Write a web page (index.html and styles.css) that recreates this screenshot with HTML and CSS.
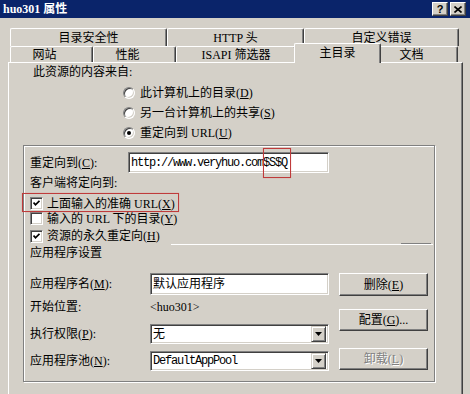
FILE: index.html
```html
<!DOCTYPE html>
<html lang="zh-CN">
<head>
<meta charset="utf-8">
<title>huo301 属性</title>
<link rel="stylesheet" href="styles.css">
</head>
<body>
<div class="window">
  <div class="titlebar">
    <span class="title">huo301 属性</span>
    <div class="tbtns">
      <span class="tbtn q">?</span>
      <span class="tbtn">
        <svg width="8" height="7" viewBox="0 0 8 7"><path d="M0.5 0.5 L7.5 6.5 M7.5 0.5 L0.5 6.5" stroke="#000" stroke-width="1.6" fill="none"/></svg>
      </span>
    </div>
  </div>

  <div class="content">
    <div class="tabs">
      <div class="tabrow row1">
        <div class="tab t-dirsec">目录安全性</div>
        <div class="tab t-http">HTTP 头</div>
        <div class="tab t-err">自定义错误</div>
      </div>
      <div class="tabrow row2">
        <div class="tab t-site shift">网站</div>
        <div class="tab t-perf shift">性能</div>
        <div class="tab t-isapi">ISAPI 筛选器</div>
        <div class="tab t-home sel">主目录</div>
        <div class="tab t-doc shift">文档</div>
      </div>
    </div>

    <div class="panel">
      <div class="src-label">此资源的内容来自:</div>
      <div class="radios">
        <div class="radio-row"><span class="radio"></span><span>此计算机上的目录(<u>D</u>)</span></div>
        <div class="radio-row"><span class="radio"></span><span>另一台计算机上的共享(<u>S</u>)</span></div>
        <div class="radio-row"><span class="radio on"></span><span>重定向到 URL(<u>U</u>)</span></div>
      </div>

      <div class="group">
        <div class="row-redirect">
          <span class="lbl-redirect">重定向到(<u>C</u>):</span>
          <div class="field f-url"><span class="mono">http://www.veryhuo.com$S$Q</span></div>
        </div>
        <div class="client-label">客户端将定向到:</div>
        <div class="checks">
          <div class="check-row"><span class="check on"><svg width="7" height="7" viewBox="0 0 7 7"><path d="M0.5 2.5 L2.5 4.8 L6.5 0.8" stroke="#000" stroke-width="1.8" fill="none"/></svg></span><span>上面输入的准确 URL(<u>X</u>)</span></div>
          <div class="check-row"><span class="check"></span><span>输入的 URL 下的目录(<u>Y</u>)</span></div>
          <div class="check-row last"><span class="check on"><svg width="7" height="7" viewBox="0 0 7 7"><path d="M0.5 2.5 L2.5 4.8 L6.5 0.8" stroke="#000" stroke-width="1.8" fill="none"/></svg></span><span>资源的永久重定向(<u>H</u>)</span></div>
        </div>
        <div class="sep"></div>
        <div class="app-title">应用程序设置</div>

        <div class="app-grid">
          <div class="app-left">
            <div class="app-row r-name">
              <span class="app-lbl">应用程序名(<u>M</u>):</span>
              <div class="field f-app"><span>默认应用程序</span></div>
            </div>
            <div class="app-row r-start">
              <span class="app-lbl">开始位置:</span>
              <span>&lt;huo301&gt;</span>
            </div>
            <div class="app-row r-perm">
              <span class="app-lbl">执行权限(<u>P</u>):</span>
              <div class="field f-sel"><span>无</span><span class="drop"><svg width="7" height="4" viewBox="0 0 7 4"><path d="M0 0 H7 L3.5 4 Z" fill="#000"/></svg></span></div>
            </div>
            <div class="app-row r-pool">
              <span class="app-lbl">应用程序池(<u>N</u>):</span>
              <div class="field f-sel"><span class="mono">DefaultAppPool</span><span class="drop"><svg width="7" height="4" viewBox="0 0 7 4"><path d="M0 0 H7 L3.5 4 Z" fill="#000"/></svg></span></div>
            </div>
          </div>
          <div class="app-right">
            <div class="btn b-del">删除(<u>E</u>)</div>
            <div class="btn b-cfg">配置(<u>G</u>)...</div>
            <div class="btn b-unload disabled">卸载(<u>L</u>)</div>
          </div>
        </div>
      </div>
    </div>
  </div>

  <div class="mark mark-url"></div>
  <div class="mark mark-exact"></div>
</div>
</body>
</html>
```

FILE: styles.css
```css
* { box-sizing: border-box; }
html, body { margin: 0; padding: 0; }
body {
  width: 470px;
  height: 394px;
  overflow: hidden;
  background: #d4d0c8;
  color: #000;
  font-family: "Liberation Serif", "Noto Sans CJK SC", serif;
  font-size: 12px;
  line-height: 14px;
}
u { text-decoration: underline; text-underline-offset: 1px; }

.window { position: relative; width: 470px; height: 394px; }

/* title bar */
.titlebar {
  height: 18px;
  background: #0a246a;
  display: flex;
  align-items: center;
  justify-content: space-between;
  padding: 0 4px 0 3px;
}
.title { color: #fff; font-weight: bold; font-size: 12px; line-height: 14px; }
.tbtns { display: flex; gap: 2px; }
.tbtn {
  width: 16px;
  height: 14px;
  background: #d4d0c8;
  border: 1px solid;
  border-color: #fff #404040 #404040 #fff;
  box-shadow: inset -1px -1px #808080;
  display: flex;
  align-items: center;
  justify-content: center;
}
.tbtn.q { font-family: "Liberation Sans", sans-serif; font-weight: bold; font-size: 11px; line-height: 12px; }

/* tabs */
.content { padding: 10px 7px 0 8px; }
.tabs { margin-left: 2px; }
.tabrow { display: flex; }
.row1 { height: 18px; }
.row2 { height: 16px; align-items: flex-end; }
.tab {
  height: 100%;
  background: #d4d0c8;
  border-top: 1px solid #fff;
  border-left: 1px solid #fff;
  border-right: 1px solid #404040;
  box-shadow: inset -1px 0 #808080;
  border-radius: 2px 2px 0 0;
  display: flex;
  align-items: center;
  justify-content: center;
  white-space: nowrap;
}
.row1 .tab { padding-top: 1px; }
.t-dirsec { width: 157px; }
.t-http { width: 137px; }
.t-err { width: 155px; }
.t-site { width: 83px; }
.t-perf { width: 83px; }
.t-isapi { width: 120px; }
.t-home { width: 87px; }
.t-doc { width: 79px; }
.shift { padding-right: 14px; }
.tab.sel {
  height: 20px;
  margin: 0 -2px -1px -2px;
  padding-bottom: 2px;
  position: relative;
  z-index: 1;
}

/* panel */
.panel {
  width: 455px;
  height: 340px;
  border-top: 1px solid #fff;
  border-left: 1px solid #fff;
  border-right: 1px solid #404040;
  box-shadow: inset -1px 0 #808080;
  padding: 2px 0 0 14px;
}
.src-label { margin-left: 10px; height: 14px; }
.radios { margin: 4px 0 0 100px; display: flex; flex-direction: column; }
.radio-row { height: 20px; display: flex; align-items: center; gap: 5px; white-space: nowrap; }
.radio {
  width: 12px;
  height: 12px;
  border-radius: 50%;
  background: #fff;
  border: 1px solid;
  border-color: #808080 #fff #fff #808080;
  box-shadow: inset 1px 1px #404040, inset -1px -1px #d4d0c8;
  display: flex;
  align-items: center;
  justify-content: center;
  flex: none;
}
.radio.on::after {
  content: "";
  width: 4px;
  height: 4px;
  border-radius: 50%;
  background: #000;
}

/* group */
.group {
  width: 412px;
  height: 237px;
  margin-top: 2px;
  border: 1px solid #808080;
  box-shadow: inset 1px 1px #fff, 1px 1px #fff;
  padding: 6px 1px 0 6px;
}
.row-redirect { display: flex; align-items: center; height: 21px; }
.lbl-redirect { width: 98px; flex: none; }
.field {
  background: #fff;
  border: 1px solid;
  border-color: #808080 #fff #fff #808080;
  box-shadow: inset 1px 1px #404040, inset -1px -1px #d4d0c8;
  padding: 0 2px;
  display: flex;
  align-items: center;
  white-space: nowrap;
  overflow: hidden;
}
.f-url { width: 201px; height: 21px; }
.mono {
  font-family: "Liberation Mono", monospace;
  font-size: 12px;
  letter-spacing: -1.2px;
}
.client-label { margin-top: 3px; height: 14px; }
.checks { margin-top: 6px; display: flex; flex-direction: column; }
.check-row { height: 15px; display: flex; align-items: center; gap: 4px; white-space: nowrap; }
.check-row.last { height: 14px; margin-top: 3px; }
.check {
  width: 13px;
  height: 13px;
  flex: none;
  background: #fff;
  border: 1px solid;
  border-color: #808080 #fff #fff #808080;
  box-shadow: inset 1px 1px #404040, inset -1px -1px #d4d0c8;
  display: flex;
  align-items: center;
  justify-content: center;
}
.check svg { display: block; }
.sep {
  height: 2px;
  background:
    linear-gradient(#fff, #fff) right bottom / 262px 1px no-repeat,
    linear-gradient(#808080, #808080) right 2px top / 30px 1px no-repeat;
}
.app-title { margin-top: 1px; height: 14px; }

.app-grid { margin-top: 13px; display: flex; gap: 10px; }
.app-left { width: 299px; display: flex; flex-direction: column; }
.app-row { display: flex; align-items: center; white-space: nowrap; }
.app-lbl { width: 120px; flex: none; }
.r-name { height: 22px; }
.f-app { width: 179px; height: 22px; }
.r-start { height: 14px; margin-top: 5px; }
.r-perm { height: 20px; margin-top: 10px; }
.r-pool { height: 20px; margin-top: 7px; }
.f-sel { width: 179px; height: 20px; padding: 0 2px 0 2px; }
.drop {
  margin-left: auto;
  width: 15px;
  height: 16px;
  flex: none;
  background: #d4d0c8;
  border: 1px solid;
  border-color: #d4d0c8 #404040 #404040 #d4d0c8;
  box-shadow: inset 1px 1px #fff, inset -1px -1px #808080;
  display: flex;
  align-items: center;
  justify-content: center;
}
.drop svg { display: block; }

.app-right { width: 89px; display: flex; flex-direction: column; }
.btn {
  background: #d4d0c8;
  border: 1px solid;
  border-color: #fff #404040 #404040 #fff;
  box-shadow: inset -1px -1px #808080;
  display: flex;
  align-items: center;
  justify-content: center;
  white-space: nowrap;
}
.b-del { height: 23px; }
.b-cfg { height: 22px; margin-top: 13px; }
.b-unload { height: 22px; margin-top: 17px; }
.btn.disabled { color: #808080; text-shadow: 1px 1px #fff; }

/* red annotation marks drawn over the screenshot */
.mark {
  position: absolute;
  border: 1px solid #bf3b3b;
  box-shadow: 0 0 1px rgba(230, 110, 110, 0.6);
}
.mark-url { left: 263px; top: 148px; width: 28px; height: 30px; }
.mark-exact { left: 22px; top: 193px; width: 157px; height: 19px; }
```
